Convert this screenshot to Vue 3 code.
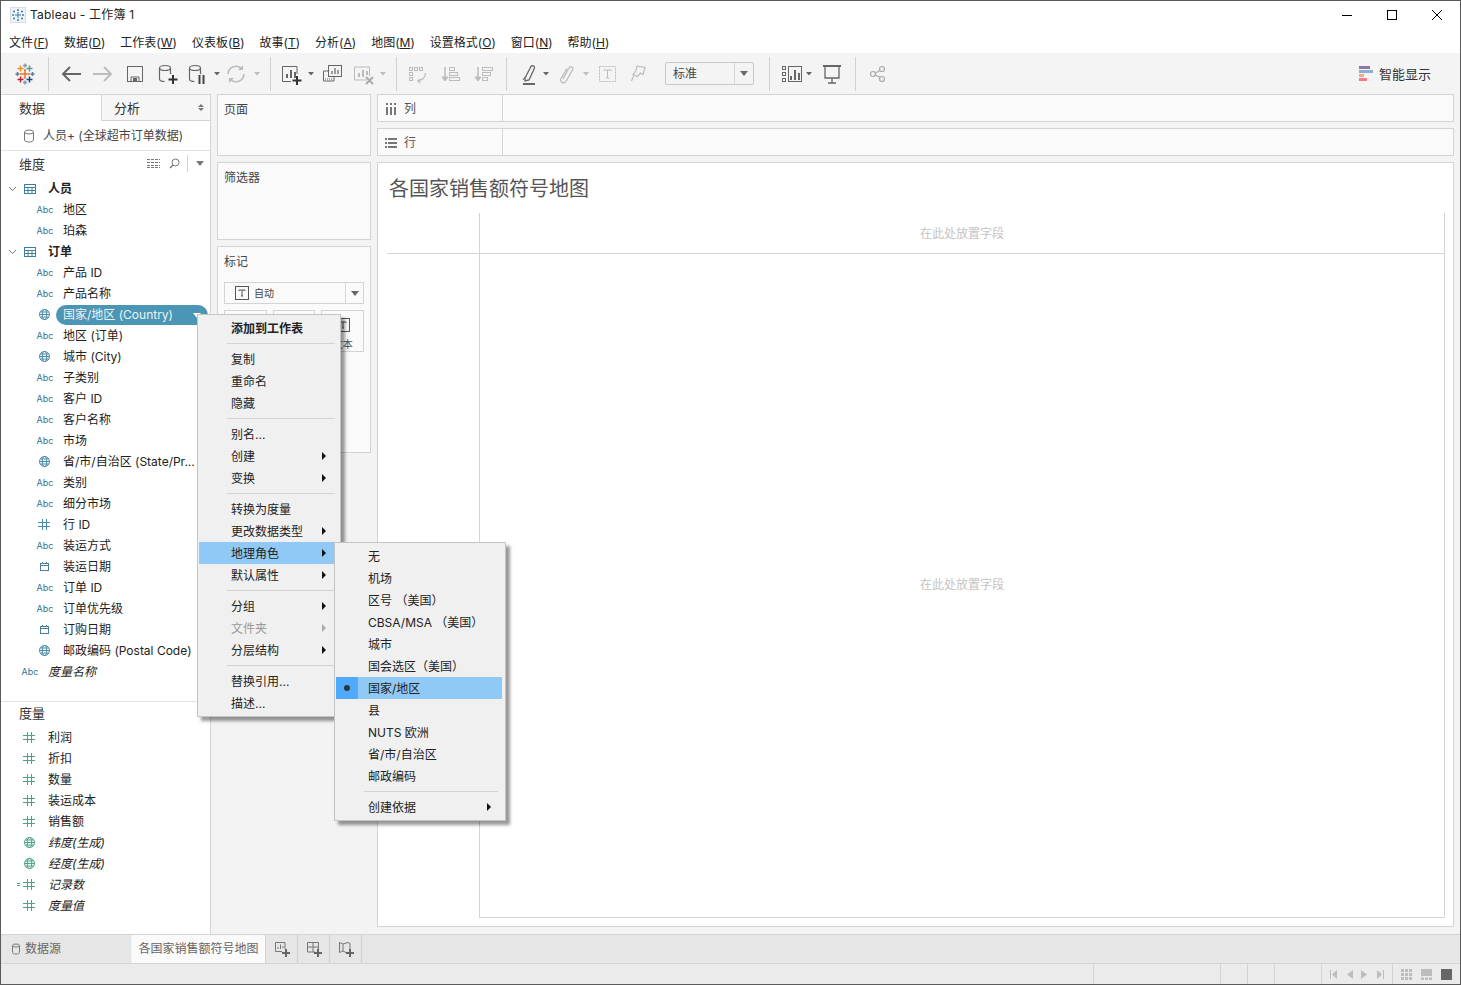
<script setup>
const G = '#666'
const L = '#bcbcbc'

const dd = (c) => `<path d="M2 3h6L5 6.500z" fill="${c}"/>`
const cyl = `<ellipse cx="10" cy="6" rx="5.5" ry="2.5" fill="none" stroke="${G}" stroke-width="1.2"/><path d="M4.5 6v11c0 1.5 2 2.5 5 2.5M15.5 6v6" fill="none" stroke="${G}" stroke-width="1.2"/>`
const chart = (c) => `<path d="M8 16v-4M12 16V8M16 16v-6" stroke="${c}" stroke-width="2" fill="none"/>`

const rawTools = [
  { c: 25, w: 24, svg: `<g fill="none" stroke-width="1.500"><path d="M12 8.500v-1M16.500 3.500v6M13.500 6.500h6" stroke="#5b9aa0"/><path d="M7.500 3.500v6M4.500 6.500h6" stroke="#eb9129"/><path d="M7.500 14.500v6M4.500 17.500h6" stroke="#c72035"/><path d="M16.500 14.500v6M13.500 17.500h6" stroke="#1f447a"/><path d="M12 1.500v4M10 3.500h4M12 18.500v4M10 20.500h4" stroke="#7d9bb0"/><path d="M2.500 12h4M4.500 10v4M17.500 12h4M19.500 10v4" stroke="#5b7fa0"/><path d="M12 7v10M7 12h10" stroke="#e8762d"/></g>` },
  { c: 48.5, w: 1, sep: true },
  { c: 71, w: 24, svg: `<path d="M22 12H4M11 5l-7 7 7 7" fill="none" stroke="${G}" stroke-width="2"/>` },
  { c: 103, w: 24, svg: `<path d="M2 12h18M13 5l7 7-7 7" fill="none" stroke="${L}" stroke-width="2"/>` },
  { c: 135, w: 24, svg: `<rect x="4.5" y="4.5" width="15" height="15" fill="none" stroke="${G}"/><path d="M8 20v-5h8v5" fill="none" stroke="${G}"/><rect x="10" y="16" width="4" height="4" fill="${G}"/>` },
  { c: 167, w: 24, svg: `${cyl}<path d="M18 13v9M13.5 17.500h9" stroke="#333" stroke-width="2"/>` },
  { c: 197, w: 24, svg: `${cyl}<path d="M14.500 13v9M18.500 13v9" stroke="#444" stroke-width="2"/>` },
  { c: 217, w: 10, svg: dd(G), small: true },
  { c: 236, w: 24, svg: `<path d="M4 12a8 8 0 0 1 14-5M20 12a8 8 0 0 1-14 5" fill="none" stroke="${L}" stroke-width="1.600"/><path d="M19 3v5h-5M5 21v-5h5" fill="${L}"/>` },
  { c: 257, w: 10, svg: dd(L), small: true },
  { c: 270.5, w: 1, sep: true },
  { c: 291, w: 24, svg: `<path d="M18 12V4.500H3.500v15H12" fill="none" stroke="${G}"/>${chart(G)}<path d="M18 14v9M13.500 18.500h9" stroke="#333" stroke-width="2"/>` },
  { c: 311, w: 10, svg: dd(G), small: true },
  { c: 332, w: 24, svg: `<rect x="8.500" y="3.500" width="13" height="11" fill="#f4f4f4" stroke="${G}"/><path d="M12 12V9M15 12V6M18 12V8" stroke="${G}" stroke-width="1.200"/><path d="M8 9H3.500v10H14v-4" fill="none" stroke="${G}"/><path d="M5 17h7" stroke="${G}" stroke-dasharray="1 1"/>` },
  { c: 363, w: 24, svg: `<path d="M16 18H3.500V5h15v9" fill="none" stroke="${L}"/><path d="M8 15v-4M12 15V8M16 13V9" stroke="${L}" stroke-width="2"/><path d="M15 15l7 7M22 15l-7 7" stroke="#aaa" stroke-width="2"/>` },
  { c: 383, w: 10, svg: dd(L), small: true },
  { c: 396.5, w: 1, sep: true },
  { c: 418, w: 24, svg: `<g fill="none" stroke="${L}"><rect x="3.500" y="5.500" width="3" height="3"/><rect x="8.500" y="5.500" width="3" height="3"/><rect x="13.500" y="5.500" width="3" height="3"/><rect x="3.500" y="10.500" width="3" height="3"/><rect x="3.500" y="15.500" width="3" height="3"/><path d="M19.500 11c0 4-3 7-8 8M11.500 19l3-2M11.500 19l3 2" stroke-width="1.200"/></g>` },
  { c: 450, w: 24, svg: `<g fill="none" stroke="${L}"><path d="M7 5v13" stroke-width="1.500"/><path d="M4 15l3 4 3-4z" fill="${L}"/><rect x="11.500" y="5.500" width="5" height="3"/><rect x="11.500" y="10.500" width="8" height="3"/><rect x="11.500" y="15.500" width="10" height="3"/></g>` },
  { c: 483, w: 24, svg: `<g fill="none" stroke="${L}"><path d="M7 5v13" stroke-width="1.500"/><path d="M4 15l3 4 3-4z" fill="${L}"/><rect x="11.500" y="5.500" width="10" height="3"/><rect x="11.500" y="10.500" width="8" height="3"/><rect x="11.500" y="15.500" width="5" height="3"/></g>` },
  { c: 506.5, w: 1, sep: true },
  { c: 529, w: 24, svg: `<path d="M8 16L14 4.500c.8-1.500 4-.5 3.500 1.500L12 18l-4 1z" fill="none" stroke="${G}" stroke-width="1.300"/><path d="M6 18l2-3" stroke="${G}"/><rect x="6" y="21" width="12" height="2" fill="${G}"/>` },
  { c: 546, w: 10, svg: dd(G), small: true },
  { c: 566, w: 24, svg: `<path d="M9 17l6-11c1.500-2.500 5-.5 3.500 2L12 19.500c-2 3-7 .5-5-3l6-10" fill="none" stroke="${L}" stroke-width="1.300"/>` },
  { c: 586, w: 10, svg: dd(L), small: true },
  { c: 608, w: 24, svg: `<rect x="3.500" y="4.500" width="16" height="15" fill="none" stroke="${L}" stroke-dasharray="2 1"/><path d="M8 9V8h7v1M11.500 8v8M10 16h3" fill="none" stroke="${L}"/>` },
  { c: 638, w: 24, svg: `<path d="M11 4l8 1.500-2 7-2.500-1.500-3 3.500-4.500-2 3-4zM8 13l-2.500 6" fill="none" stroke="${L}" stroke-width="1.200"/>` },
  { c: 709.5, w: 89, select: true },
  { c: 769.5, w: 1, sep: true },
  { c: 792, w: 24, svg: `<g fill="none" stroke="${G}"><rect x="2.500" y="4.500" width="3" height="3"/><rect x="2.500" y="10.500" width="3" height="3"/><rect x="2.500" y="16.500" width="3" height="3"/><rect x="8.500" y="4.500" width="13" height="15"/></g><path d="M11 18v-4M15 18V8M19 18v-7" stroke="${G}" stroke-width="2"/>` },
  { c: 809, w: 10, svg: dd(G), small: true },
  { c: 831.5, w: 24, svg: `<path d="M3 4h18" stroke="${G}" stroke-width="2"/><path d="M5 4v12h14V4M12 16v5M8 21h8" fill="none" stroke="${G}" stroke-width="1.300"/>` },
  { c: 855.5, w: 1, sep: true },
  { c: 878, w: 24, svg: `<g fill="none" stroke="#aaa" stroke-width="1.200"><circle cx="7" cy="12" r="2.500"/><circle cx="16" cy="7" r="2.500"/><circle cx="16" cy="17" r="2.500"/><path d="M9.500 11l4.500-2.500M9.500 13l4.500 2.500"/></g>` }
]

// each item gets the margin that brings its centre to the spot it has in the bar
let right = 1
const tools = rawTools.map((t) => {
  const left = t.c - t.w / 2
  const item = { ...t, ml: left - right }
  right = left + t.w
  return item
})

const menuNames = [
  ['文件(', 'F', ')'], ['数据(', 'D', ')'], ['工作表(', 'W', ')'], ['仪表板(', 'B', ')'], ['故事(', 'T', ')'],
  ['分析(', 'A', ')'], ['地图(', 'M', ')'], ['设置格式(', 'O', ')'], ['窗口(', 'N', ')'], ['帮助(', 'H', ')']
]

const dimensions = [
  { group: true, label: '人员' },
  { type: 'abc', label: '地区' },
  { type: 'abc', label: '珀森' },
  { group: true, label: '订单' },
  { type: 'abc', label: '产品 ID' },
  { type: 'abc', label: '产品名称' },
  { type: 'globe', label: '国家/地区 (Country)', selected: true },
  { type: 'abc', label: '地区 (订单)' },
  { type: 'globe', label: '城市 (City)' },
  { type: 'abc', label: '子类别' },
  { type: 'abc', label: '客户 ID' },
  { type: 'abc', label: '客户名称' },
  { type: 'abc', label: '市场' },
  { type: 'globe', label: '省/市/自治区 (State/Pr...' },
  { type: 'abc', label: '类别' },
  { type: 'abc', label: '细分市场' },
  { type: 'hash', label: '行 ID' },
  { type: 'abc', label: '装运方式' },
  { type: 'date', label: '装运日期' },
  { type: 'abc', label: '订单 ID' },
  { type: 'abc', label: '订单优先级' },
  { type: 'date', label: '订购日期' },
  { type: 'globe', label: '邮政编码 (Postal Code)' },
  { type: 'abc', label: '度量名称', top: true }
]

const measures = [
  { type: 'hash', label: '利润' },
  { type: 'hash', label: '折扣' },
  { type: 'hash', label: '数量' },
  { type: 'hash', label: '装运成本' },
  { type: 'hash', label: '销售额' },
  { type: 'globe', label: '纬度(生成)', italic: true },
  { type: 'globe', label: '经度(生成)', italic: true },
  { type: 'calc', label: '记录数', italic: true },
  { type: 'hash', label: '度量值', italic: true }
]

const fieldMenu = [
  { label: '添加到工作表', bold: true },
  { sep: true },
  { label: '复制' }, { label: '重命名' }, { label: '隐藏' },
  { sep: true },
  { label: '别名...' }, { label: '创建', arrow: true }, { label: '变换', arrow: true },
  { sep: true },
  { label: '转换为度量' }, { label: '更改数据类型', arrow: true },
  { label: '地理角色', arrow: true, active: true }, { label: '默认属性', arrow: true },
  { sep: true },
  { label: '分组', arrow: true }, { label: '文件夹', arrow: true, disabled: true }, { label: '分层结构', arrow: true },
  { sep: true },
  { label: '替换引用...' }, { label: '描述...' }
]

const geoMenu = [
  { label: '无' }, { label: '机场' }, { label: '区号 （美国）' }, { label: 'CBSA/MSA （美国）' },
  { label: '城市' }, { label: '国会选区（美国）' }, { label: '国家/地区', active: true, checked: true },
  { label: '县' }, { label: 'NUTS 欧洲' }, { label: '省/市/自治区' }, { label: '邮政编码' },
  { sep: true },
  { label: '创建依据', arrow: true }
]

const markButtons = ['颜色', '大小', '文本']
</script>

<template>
  <div class="app">
    <header class="titlebar">
      <svg class="app-icon" width="16" height="16" viewBox="0 0 16 16">
        <rect x="0.500" y="0.500" width="15" height="15" fill="#eef3f7" stroke="#dcdcdc" />
        <path d="M8 5v6M5 8h6M8 2v2M7 3h2M8 12v2M7 13h2M2 8h2M3 7v2M12 8h2M13 7v2M4 3.500v2M3 4.500h2M12 3.500v2M11 4.500h2M4 10.500v2M3 11.500h2M12 10.500v2M11 11.500h2" stroke="#3d7fa6" fill="none" />
      </svg>
      <span class="app-name">Tableau - 工作簿 1</span>
      <div class="win-btns">
        <svg width="12" height="12" viewBox="0 0 12 12"><path d="M1 6.500h10" stroke="#000" /></svg>
        <svg width="12" height="12" viewBox="0 0 12 12"><rect x="1.500" y="1.500" width="9" height="9" fill="none" stroke="#000" /></svg>
        <svg width="12" height="12" viewBox="0 0 12 12"><path d="M1 1l10 10M11 1L1 11" stroke="#000" /></svg>
      </div>
    </header>

    <nav class="menubar">
      <span v-for="m in menuNames" :key="m[1]">{{ m[0] }}<u>{{ m[1] }}</u>{{ m[2] }}</span>
    </nav>

    <div class="toolbar">
      <template v-for="(t, i) in tools" :key="i">
        <span v-if="t.sep" class="tool-sep" :style="{ marginLeft: t.ml + 'px' }"></span>
        <div v-else-if="t.select" class="tool-select" :style="{ marginLeft: t.ml + 'px' }">
          <span class="select-text">标准</span>
          <span class="select-arrow"><i class="tri"></i></span>
        </div>
        <svg
          v-else-if="t.small"
          class="tool"
          width="10"
          height="10"
          viewBox="0 0 10 10"
          :style="{ marginLeft: t.ml + 'px' }"
          v-html="t.svg"
        ></svg>
        <svg
          v-else
          class="tool"
          width="24"
          height="24"
          viewBox="0 0 24 24"
          :style="{ marginLeft: t.ml + 'px' }"
          v-html="t.svg"
        ></svg>
      </template>
      <div class="show-me">
        <span class="bars"><i class="b1"></i><i class="b2"></i><i class="b3"></i><i class="b4"></i></span>
        <span>智能显示</span>
      </div>
    </div>

    <main class="workspace">
      <aside class="side">
        <div class="side-tabs">
          <div class="side-tab on">数据</div>
          <div class="side-tab">分析<span class="updown"><i></i><i></i></span></div>
        </div>
        <div class="source">
          <svg width="12" height="14" viewBox="0 0 12 14">
            <ellipse cx="6" cy="3" rx="4.500" ry="2" fill="none" stroke="#777" />
            <path d="M1.500 3v8c0 1 2 2 4.500 2s4.500-1 4.500-2V3" fill="none" stroke="#777" />
          </svg>
          <span>人员+ (全球超市订单数据)</span>
        </div>

        <section class="dims">
          <div class="pane-head">
            <span class="pane-title">维度</span>
            <div class="head-tools">
              <svg width="13" height="10" viewBox="0 0 13 10"><path d="M0 1.500h13M0 4.500h13M0 7.500h13M0 9.500h13" stroke="#777" stroke-dasharray="3 1" /></svg>
              <svg width="11" height="11" viewBox="0 0 11 11"><circle cx="6.500" cy="4.500" r="3.500" fill="none" stroke="#777" /><path d="M4 7l-3 3" stroke="#777" stroke-width="1.500" /></svg>
              <span class="head-sep"></span>
              <i class="tri head-tri"></i>
            </div>
          </div>
          <div
            v-for="d in dimensions"
            :key="d.label"
            class="field"
            :class="{ group: d.group, 'top-field': d.top }"
          >
            <template v-if="d.group">
              <svg class="chev" width="9" height="6" viewBox="0 0 9 6"><path d="M1 1l3.500 3.500L8 1" fill="none" stroke="#777" /></svg>
              <svg class="tbl" width="12" height="10" viewBox="0 0 12 10">
                <rect x="0.500" y="0.500" width="11" height="9" fill="none" stroke="#3e7f9f" />
                <path d="M0 3.500h12M0 6.500h12M4 3v7M8 3v7" stroke="#3e7f9f" />
              </svg>
              <b>{{ d.label }}</b>
            </template>
            <template v-else>
              <span class="type">
                <span v-if="d.type === 'abc'" class="abc">Abc</span>
                <svg v-else-if="d.type === 'globe'" width="13" height="13" viewBox="0 0 13 13" fill="none" stroke="#4a8aa8">
                  <circle cx="6.500" cy="6.500" r="5" />
                  <ellipse cx="6.500" cy="6.500" rx="2.200" ry="5" />
                  <path d="M1.500 6.500h10M2.200 4h8.600M2.200 9h8.600" />
                </svg>
                <svg v-else-if="d.type === 'hash'" width="12" height="11" viewBox="0 0 12 11" stroke="#4a8aa8">
                  <path d="M4.500 0v11M8.500 0v11M0 3.500h12M0 7.500h12" />
                </svg>
                <svg v-else width="12" height="11" viewBox="0 0 12 11" fill="none" stroke="#4a7f9c">
                  <rect x="2.500" y="2.500" width="8" height="7" />
                  <path d="M2.500 4.500h8M4.500 1v2M8.500 1v2" />
                </svg>
              </span>
              <span class="label" :class="{ pill: d.selected, italic: d.top }">{{ d.label }}<i v-if="d.selected" class="pill-tri"></i></span>
            </template>
          </div>
        </section>

        <section class="meas">
          <div class="pane-head"><span class="pane-title">度量</span></div>
          <div v-for="m in measures" :key="m.label" class="field measure">
            <span class="type">
              <svg v-if="m.type === 'globe'" width="13" height="13" viewBox="0 0 13 13" fill="none" stroke="#4aa583">
                <circle cx="6.500" cy="6.500" r="5" />
                <ellipse cx="6.500" cy="6.500" rx="2.200" ry="5" />
                <path d="M1.500 6.500h10M2.200 4h8.600M2.200 9h8.600" />
              </svg>
              <svg v-else-if="m.type === 'calc'" class="calc" width="18" height="11" viewBox="0 0 18 11" stroke="#4aa583">
                <path d="M0 4.500h3M0 6.500h3M10.500 0v11M14.500 0v11M6 3.500h12M6 7.500h12" />
              </svg>
              <svg v-else width="12" height="11" viewBox="0 0 12 11" stroke="#4aa583">
                <path d="M4.500 0v11M8.500 0v11M0 3.500h12M0 7.500h12" />
              </svg>
            </span>
            <span class="label" :class="{ italic: m.italic }">{{ m.label }}</span>
          </div>
        </section>
      </aside>

      <div class="cards">
        <section class="card pages"><h4>页面</h4></section>
        <section class="card filters"><h4>筛选器</h4></section>
        <section class="card marks">
          <h4>标记</h4>
          <div class="mark-select">
            <svg width="14" height="14" viewBox="0 0 14 14" fill="none" stroke="#555">
              <rect x="0.500" y="0.500" width="13" height="13" />
              <path d="M4 5V4h6v1M7 4v6M6 10h2" />
            </svg>
            <span>自动</span>
            <span class="mark-arrow"><i class="tri"></i></span>
          </div>
          <div class="mark-btns">
            <div v-for="b in markButtons" :key="b" class="mark-btn">
              <svg width="14" height="14" viewBox="0 0 14 14" fill="none" stroke="#555">
                <rect x="0.500" y="0.500" width="13" height="13" />
                <path d="M4 5V4h6v1M7 4v6M6 10h2" />
              </svg>
              <span>{{ b }}</span>
            </div>
          </div>
        </section>
      </div>

      <div class="stage">
        <div class="shelf">
          <div class="shelf-name">
            <svg width="12" height="12" viewBox="0 0 12 12" fill="#777"><path d="M1 4h2v8H1zM5 4h2v8H5zM9 4h2v8H9zM1 0h2v2H1zM5 0h2v2H5zM9 0h2v2H9z" /></svg>
            <span>列</span>
          </div>
        </div>
        <div class="shelf">
          <div class="shelf-name">
            <svg width="12" height="12" viewBox="0 0 12 12" fill="#777"><path d="M3 1h9v2H3zM3 5h9v2H3zM3 9h9v2H3zM0 1h2v2H0zM0 5h2v2H0zM0 9h2v2H0z" /></svg>
            <span>行</span>
          </div>
        </div>
        <section class="canvas">
          <h2 class="sheet-title">各国家销售额符号地图</h2>
          <div class="plot">
            <div class="corner"></div>
            <div class="drop-top">在此处放置字段</div>
            <div></div>
            <div class="drop-main">在此处放置字段</div>
          </div>
        </section>
      </div>
    </main>

    <footer class="tabsbar">
      <div class="src-tab">
        <svg width="10" height="12" viewBox="0 0 10 12">
          <ellipse cx="5" cy="2.500" rx="3.500" ry="1.500" fill="none" stroke="#777" />
          <path d="M1.500 2.500v7c0 1 1.500 1.500 3.500 1.500s3.500-.5 3.500-1.500v-7" fill="none" stroke="#777" />
        </svg>
        <span>数据源</span>
      </div>
      <div class="sheet-tab">各国家销售额符号地图</div>
      <div class="add-tab">
        <svg width="16" height="16" viewBox="0 0 16 16"><path d="M11 8V1.500H1.500v9H8" fill="none" stroke="#777" /><path d="M4 8V6M6.500 8V3.500M9 7V5" stroke="#777" /><path d="M12 8v8M8 12h8" stroke="#666" stroke-width="2" /></svg>
      </div>
      <div class="add-tab">
        <svg width="16" height="16" viewBox="0 0 16 16"><path d="M9 11H1.500V1.500h11V9M1.500 6h11M7 1.500V11" fill="none" stroke="#777" /><path d="M12 8v8M8 12h8" stroke="#666" stroke-width="2" /></svg>
      </div>
      <div class="add-tab">
        <svg width="16" height="16" viewBox="0 0 16 16"><path d="M8 11.500L5 10 1.500 11.500v-10L5 3l5-1.500 2 1V8M5 3v7" fill="none" stroke="#777" /><path d="M12 8v8M8 12h8" stroke="#666" stroke-width="2" /></svg>
      </div>
    </footer>

    <div class="statusbar">
      <div></div><div></div><div></div><div></div><div></div>
      <div class="nav">
        <svg width="8" height="9" viewBox="0 0 8 9" fill="#bdbdbd"><path d="M0 0h1v9H0zM7 0v9L2 4.500z" /></svg>
        <svg width="6" height="9" viewBox="0 0 6 9" fill="#bdbdbd"><path d="M6 0v9L0 4.500z" /></svg>
        <svg width="6" height="9" viewBox="0 0 6 9" fill="#bdbdbd"><path d="M0 0v9l6-4.500z" /></svg>
        <svg width="8" height="9" viewBox="0 0 8 9" fill="#bdbdbd"><path d="M7 0h1v9H7zM1 0v9l5-4.500z" /></svg>
      </div>
      <div class="views">
        <svg width="11" height="11" viewBox="0 0 11 11" fill="#bdbdbd"><path d="M0 0h3v3H0zM4 0h3v3H4zM8 0h3v3H8zM0 4h3v3H0zM4 4h3v3H4zM8 4h3v3H8zM0 8h3v3H0zM4 8h3v3H4zM8 8h3v3H8z" /></svg>
        <svg width="11" height="11" viewBox="0 0 11 11" fill="#bdbdbd"><path d="M0 0h11v7H0zM0 8.500h3V11H0zM4 8.500h3V11H4zM8 8.500h3V11H8z" /></svg>
        <svg width="11" height="11" viewBox="0 0 11 11"><rect width="11" height="11" fill="#666" /></svg>
      </div>
    </div>

    <div class="menu field-menu">
      <template v-for="(item, i) in fieldMenu" :key="i">
        <div v-if="item.sep" class="menu-sep"></div>
        <div v-else class="menu-item" :class="{ bold: item.bold, active: item.active, disabled: item.disabled }">
          <span>{{ item.label }}</span>
          <i v-if="item.arrow" class="arrow"></i>
        </div>
      </template>
    </div>

    <div class="menu geo-menu">
      <template v-for="(item, i) in geoMenu" :key="i">
        <div v-if="item.sep" class="menu-sep"></div>
        <div v-else class="menu-item" :class="{ active: item.active }">
          <span v-if="item.checked" class="check"><i></i></span>
          <span>{{ item.label }}</span>
          <i v-if="item.arrow" class="arrow"></i>
        </div>
      </template>
    </div>
  </div>
</template>

<style>
html,
body {
  margin: 0;
  background: #fff;
}
</style>

<style scoped>
.app {
  position: relative;
  box-sizing: border-box;
  width: 1461px;
  height: 985px;
  border: 1px solid #5a5a5a;
  display: flex;
  flex-direction: column;
  overflow: hidden;
  background: #f3f3f3;
  color: #333;
  font: 12px/16px Inter, "Noto Sans CJK SC", sans-serif;
}

.titlebar {
  height: 29px;
  display: flex;
  align-items: center;
  background: #fff;
  flex: none;
  padding: 0 0 1px 9px;
  box-sizing: border-box;
}

.app-icon {
  margin-right: 4px;
}

.app-name {
  color: #222;
  letter-spacing: 0.2px;
}

.win-btns {
  margin-left: auto;
  display: flex;
  gap: 33px;
  padding-right: 17px;
}

.menubar {
  height: 23px;
  flex: none;
  box-sizing: border-box;
  display: flex;
  gap: 15px;
  align-items: center;
  padding: 2px 0 0 8px;
  background: #fff;
  color: #222;
}

.toolbar {
  height: 41px;
  flex: none;
  display: flex;
  align-items: center;
  background: #f4f4f4;
}

.tool {
  flex: none;
  overflow: visible;
}

.tool-sep {
  flex: none;
  width: 1px;
  height: 34px;
  background: #d2d2d2;
}

.tool-select {
  flex: none;
  box-sizing: border-box;
  width: 89px;
  height: 23px;
  display: flex;
  align-items: center;
  border: 1px solid #c8c8c8;
  border-radius: 2px;
}

.select-text {
  flex: 1;
  padding: 1px 0 0 7px;
  color: #444;
}

.select-arrow {
  width: 18px;
  height: 100%;
  border-left: 1px solid #d8d8d8;
  display: flex;
  align-items: center;
  justify-content: center;
}

.tri {
  display: block;
  width: 0;
  height: 0;
  border-left: 4px solid transparent;
  border-right: 4px solid transparent;
  border-top: 5px solid #666;
}

.show-me {
  margin-left: auto;
  display: flex;
  align-items: center;
  gap: 6px;
  padding-right: 29px;
  font-size: 13px;
  color: #333;
}

.bars {
  display: flex;
  flex-direction: column;
  gap: 1px;
  width: 14px;
}

.bars i {
  display: block;
  height: 3px;
}

.b1 { width: 11px; background: #8b7aa0; }
.b2 { width: 14px; background: #8aaed4; }
.b3 { width: 5px; background: #f2ab85; }
.b4 { width: 8px; background: #f8798a; }

.workspace {
  flex: 1;
  min-height: 0;
  display: flex;
}

.side {
  flex: none;
  box-sizing: border-box;
  width: 210px;
  background: #fff;
  border-right: 1px solid #d4d4d4;
  display: flex;
  flex-direction: column;
}

.side-tabs {
  display: flex;
  height: 27px;
  flex: none;
  box-sizing: border-box;
  border-top: 1px solid #d4d4d4;
}

.side-tab {
  flex: 1;
  display: flex;
  align-items: center;
  padding-left: 12px;
  font-size: 13px;
  background: #f6f6f6;
  border-bottom: 1px solid #d4d4d4;
  border-left: 1px solid #d4d4d4;
  color: #333;
  position: relative;
}

.side-tab.on {
  flex: none;
  width: 100px;
  box-sizing: border-box;
  padding-left: 18px;
  background: #fff;
  border: 0;
}

.updown {
  margin-left: auto;
  margin-right: 6px;
  display: flex;
  flex-direction: column;
  gap: 1px;
}

.updown i {
  display: block;
  width: 0;
  height: 0;
  border-left: 3px solid transparent;
  border-right: 3px solid transparent;
  border-bottom: 3px solid #777;
}

.updown i + i {
  border-bottom: 0;
  border-top: 3px solid #777;
}

.source {
  height: 30px;
  flex: none;
  box-sizing: border-box;
  display: flex;
  align-items: center;
  gap: 8px;
  padding-left: 22px;
  border-bottom: 1px solid #e2e2e2;
  color: #444;
}

.dims {
  height: 551px;
  flex: none;
  box-sizing: border-box;
  border-bottom: 1px solid #e2e2e2;
}

.pane-head {
  height: 27px;
  box-sizing: border-box;
  display: flex;
  align-items: center;
  padding: 0 0 2px 18px;
}

.pane-title {
  font-size: 13px;
}

.meas .pane-head {
  height: 25px;
  padding-bottom: 3px;
}

.head-tools {
  margin-left: auto;
  display: flex;
  align-items: center;
  gap: 7px;
  padding-right: 6px;
  margin-top: -1px;
}

.head-tools svg:first-child {
  margin-right: 2px;
}

.head-sep {
  width: 1px;
  height: 17px;
  background: #d4d4d4;
}

.head-tri {
  border-top-color: #777;
  margin-left: 1px;
}

.field {
  height: 21px;
  display: flex;
  align-items: center;
  color: #222;
  white-space: nowrap;
  overflow: hidden;
}

.field.group b {
  margin-left: 12px;
  font-weight: 700;
}

.chev {
  margin-left: 7px;
}

.tbl {
  margin-left: 7px;
}

.type {
  flex: none;
  width: 18px;
  margin-left: 34px;
  margin-right: 10px;
  display: flex;
  justify-content: center;
  align-items: center;
}

.top-field .type {
  margin-left: 19px;
}

.measure .type {
  margin-left: 19px;
  margin-right: 10px;
}

.abc {
  padding-left: 2px;
  font-size: 9px;
  color: #2f7394;
}

.label.italic {
  font-style: italic;
}

.pill {
  position: relative;
  box-sizing: border-box;
  width: 152px;
  height: 20px;
  margin-left: -7px;
  padding-left: 7px;
  border-radius: 10px;
  background: #4b96b4;
  color: #eaf3f7;
  line-height: 20px;
}

.pill-tri {
  position: absolute;
  right: 7px;
  top: 8px;
  width: 0;
  height: 0;
  border-left: 4px solid transparent;
  border-right: 4px solid transparent;
  border-top: 5px solid #fff;
}

.calc {
  margin-left: -6px;
}

.cards {
  flex: none;
  width: 154px;
  margin-left: 6px;
  display: flex;
  flex-direction: column;
  gap: 6px;
}

.card {
  box-sizing: border-box;
  background: #fafafa;
  border: 1px solid #d4d4d4;
  padding: 7px 6px 0;
}

.card h4 {
  margin: 0;
  font-size: 12px;
  font-weight: 400;
  line-height: 16px;
  color: #444;
}

.pages { height: 62px; }
.filters { height: 78px; }
.marks { height: 207px; }

.mark-select {
  margin-top: 12px;
  height: 22px;
  box-sizing: border-box;
  border: 1px solid #d4d4d4;
  display: flex;
  align-items: center;
  padding-left: 10px;
  gap: 5px;
  font-size: 10px;
  color: #444;
}

.mark-arrow {
  margin-left: auto;
  width: 17px;
  height: 100%;
  display: flex;
  align-items: center;
  justify-content: center;
  border-left: 1px solid #d8d8d8;
}

.mark-btns {
  display: flex;
  gap: 6px;
  margin-top: 6px;
}

.mark-btn {
  flex: 1;
  height: 42px;
  box-sizing: border-box;
  border: 1px solid #d4d4d4;
  display: flex;
  flex-direction: column;
  align-items: center;
  padding-top: 7px;
  gap: 6px;
  font-size: 10px;
  line-height: 12px;
  color: #444;
}

.stage {
  flex: none;
  width: 1077px;
  margin-left: 6px;
  display: flex;
  flex-direction: column;
  gap: 6px;
  padding-bottom: 7px;
  box-sizing: border-box;
}

.shelf {
  height: 28px;
  flex: none;
  box-sizing: border-box;
  background: #fafafa;
  border: 1px solid #d4d4d4;
}

.shelf-name {
  width: 125px;
  height: 100%;
  box-sizing: border-box;
  display: flex;
  align-items: center;
  gap: 7px;
  padding: 1px 0 0 7px;
  border-right: 1px solid #d4d4d4;
  color: #555;
}

.canvas {
  flex: 1;
  min-height: 0;
  box-sizing: border-box;
  background: #fff;
  border: 1px solid #d4d4d4;
  padding: 0 9px;
}

.sheet-title {
  margin: 0;
  height: 50px;
  padding-left: 2px;
  font-size: 20px;
  font-weight: 400;
  line-height: 52px;
  color: #555;
}

.plot {
  display: grid;
  grid-template-columns: 92px 966px;
  grid-template-rows: 41px 664px;
  color: #c4c4c4;
}

.corner {
  border-bottom: 1px solid #d4d4d4;
}

.drop-top,
.drop-main {
  display: flex;
  align-items: center;
  justify-content: center;
  border-left: 1px solid #d4d4d4;
  border-right: 1px solid #d4d4d4;
  border-bottom: 1px solid #d4d4d4;
}

.drop-top {
  padding-top: 2px;
}

.drop-main {
  padding-bottom: 2px;
}

.tabsbar {
  height: 29px;
  flex: none;
  box-sizing: border-box;
  display: flex;
  background: #e6e6e6;
  border-top: 1px solid #d4d4d4;
}

.src-tab {
  width: 131px;
  box-sizing: border-box;
  display: flex;
  align-items: center;
  gap: 4px;
  padding-left: 10px;
  color: #666;
  border-right: 1px solid #f2f2f2;
}

.sheet-tab {
  width: 133px;
  display: flex;
  align-items: center;
  justify-content: center;
  background: #fafafa;
  color: #666;
  border-right: 1px solid #d4d4d4;
}

.add-tab {
  width: 32px;
  box-sizing: border-box;
  display: flex;
  align-items: center;
  justify-content: center;
  border-right: 1px solid #d0d0d0;
}

.statusbar {
  height: 21px;
  flex: none;
  box-sizing: border-box;
  display: grid;
  grid-template-columns: 1fr 127px 27px 27px 47px 71px 68px;
  background: #ebebeb;
  border-top: 1px solid #d4d4d4;
}

.statusbar > div + div {
  border-left: 1px solid #d4d4d4;
}

.nav,
.views {
  display: flex;
  align-items: center;
  justify-content: space-around;
}

.nav {
  padding: 0 4px;
}

.views {
  padding: 0 3px;
}

.menu {
  position: absolute;
  box-sizing: border-box;
  padding: 2px 1px;
  background: #f0f0f0;
  border: 1px solid #c4c4c4;
  box-shadow: 4px 4px 3px rgba(0, 0, 0, 0.4);
  color: #222;
}

.field-menu {
  left: 196px;
  top: 313px;
  width: 144px;
  z-index: 2;
}

.geo-menu {
  left: 333px;
  top: 541px;
  width: 172px;
  z-index: 3;
  padding-right: 3px;
}

.menu-item {
  position: relative;
  height: 22px;
  line-height: 24px;
  padding-left: 32px;
  white-space: nowrap;
}

.menu-item.bold {
  font-weight: 700;
}

.menu-item.disabled {
  color: #9a9a9a;
}

.menu-item.active {
  background: #90c8f6;
}

.check {
  position: absolute;
  left: 0;
  top: 0;
  width: 22px;
  height: 22px;
  background: #4eaafa;
  display: flex;
  align-items: center;
  justify-content: center;
}

.check i {
  width: 6px;
  height: 6px;
  border-radius: 50%;
  background: #333;
}

.menu-sep {
  height: 1px;
  margin: 4px 4px 4px 28px;
  background: #d4d4d4;
}

.arrow {
  position: absolute;
  right: 11px;
  top: 7px;
  width: 0;
  height: 0;
  border-top: 4px solid transparent;
  border-bottom: 4px solid transparent;
  border-left: 4px solid #111;
}

.field-menu .arrow {
  right: 13px;
}

.disabled .arrow {
  border-left-color: #aaa;
}
</style>
